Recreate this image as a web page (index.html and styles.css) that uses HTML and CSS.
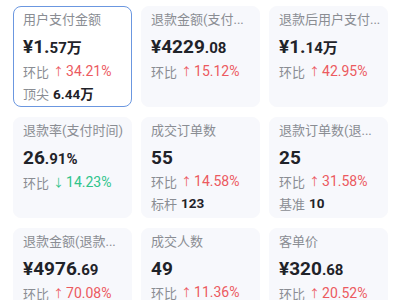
FILE: index.html
```html
<!DOCTYPE html>
<html lang="zh-CN">
<head>
    <meta charset="UTF-8">
    <meta name="viewport" content="width=device-width, initial-scale=1.0">
    <title>核心指标</title>
    <link rel="stylesheet" href="styles.css">
</head>
<body>
    <div class="metric-grid">
        <div class="metric-card active">
            <div class="metric-title">用户支付金额</div>
            <div class="metric-value">¥1.<small>57万</small></div>
            <div class="metric-row">环比 <span class="up"><i class="arrow">↑</i>34.21%</span></div>
            <div class="metric-row">顶尖 <b>6.44万</b></div>
        </div>
        <div class="metric-card">
            <div class="metric-title">退款金额(支付...</div>
            <div class="metric-value">¥4229<small>.08</small></div>
            <div class="metric-row">环比 <span class="up"><i class="arrow">↑</i>15.12%</span></div>
        </div>
        <div class="metric-card">
            <div class="metric-title">退款后用户支付...</div>
            <div class="metric-value">¥1.<small>14万</small></div>
            <div class="metric-row">环比 <span class="up"><i class="arrow">↑</i>42.95%</span></div>
        </div>

        <div class="metric-card">
            <div class="metric-title">退款率(支付时间)</div>
            <div class="metric-value">26<small>.91%</small></div>
            <div class="metric-row">环比 <span class="down"><i class="arrow">↓</i>14.23%</span></div>
        </div>
        <div class="metric-card">
            <div class="metric-title">成交订单数</div>
            <div class="metric-value">55</div>
            <div class="metric-row">环比 <span class="up"><i class="arrow">↑</i>14.58%</span></div>
            <div class="metric-row">标杆 <b>123</b></div>
        </div>
        <div class="metric-card">
            <div class="metric-title">退款订单数(退...</div>
            <div class="metric-value">25</div>
            <div class="metric-row">环比 <span class="up"><i class="arrow">↑</i>31.58%</span></div>
            <div class="metric-row">基准 <b>10</b></div>
        </div>

        <div class="metric-card">
            <div class="metric-title">退款金额(退款...</div>
            <div class="metric-value">¥4976<small>.69</small></div>
            <div class="metric-row">环比 <span class="up"><i class="arrow">↑</i>70.08%</span></div>
        </div>
        <div class="metric-card">
            <div class="metric-title">成交人数</div>
            <div class="metric-value">49</div>
            <div class="metric-row">环比 <span class="up"><i class="arrow">↑</i>11.36%</span></div>
        </div>
        <div class="metric-card">
            <div class="metric-title">客单价</div>
            <div class="metric-value">¥320<small>.68</small></div>
            <div class="metric-row">环比 <span class="up"><i class="arrow">↑</i>20.52%</span></div>
        </div>
    </div>
</body>
</html>
```

FILE: styles.css
```css
body {
    margin: 0;
    background: #fff;
    font-family: Roboto, "Noto Sans CJK SC", sans-serif;
    color: #1f2329;
}
.metric-grid {
    display: grid;
    grid-template-columns: repeat(3, 119px);
    grid-auto-rows: 101px;
    gap: 10px 9px;
    padding: 6px 13px;
}
.metric-card {
    box-sizing: border-box;
    background: #f7f8fc;
    border: 1px solid #f7f8fc;
    border-radius: 8px;
    padding: 3px 9px;
    overflow: hidden;
}
.metric-card.active {
    background: #fff;
    border-color: #6b97e0;
}
.metric-title {
    font-size: 13px;
    line-height: 20px;
    color: #8a8d93;
    white-space: nowrap;
}
.metric-value {
    font-size: 19px;
    font-weight: bold;
    line-height: 24px;
    margin: 5px 0 0;
}
.metric-value small {
    font-size: 15px;
}
.metric-row {
    display: flex;
    align-items: center;
    gap: 4px;
    height: 22px;
    font-size: 13px;
    color: #8a8d93;
    white-space: nowrap;
}
.metric-row b {
    color: #1f2329;
    font-size: 13.5px;
    font-weight: bold;
}
.up {
    color: #ec5a5f;
    font-size: 14px;
}
.down {
    color: #2fc48b;
    font-size: 14px;
}
.arrow {
    font-style: normal;
    font-size: 11px;
    margin-right: 2px;
}
```
